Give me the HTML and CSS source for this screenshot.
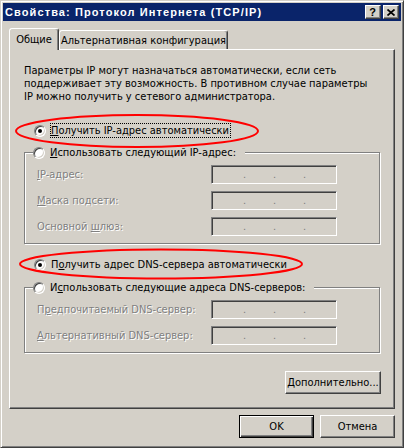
FILE: index.html
```html
<!DOCTYPE html>
<html lang="ru">
<head>
<meta charset="utf-8">
<title>Свойства: Протокол Интернета (TCP/IP)</title>
<link rel="stylesheet" href="styles.css">
</head>
<body>
<div class="window">
  <div class="titlebar">
    <span class="title">Свойства: Протокол Интернета (TCP/IP)</span>
    <div class="caption-btns">
      <span class="cbtn help">?</span>
      <span class="cbtn close"><svg width="8" height="7" viewBox="0 0 8 7"><path d="M0.5 0.5 L7.5 6.5 M7.5 0.5 L0.5 6.5" stroke="#000" stroke-width="1.7" fill="none"/></svg></span>
    </div>
  </div>
  <div class="tabs">
    <div class="tab active">Общие</div>
    <div class="tab">Альтернативная конфигурация</div>
  </div>
  <div class="panel">
    <p class="intro">Параметры IP могут назначаться автоматически, если сеть<br>поддерживает эту возможность. В противном случае параметры<br>IP можно получить у сетевого администратора.</p>

    <div class="radio-row">
      <span class="radio checked"></span>
      <span class="rlabel focus"><u>П</u>олучить IP-адрес автоматически</span>
    </div>

    <div class="group">
      <div class="group-head">
        <span class="radio"></span>
        <span class="rlabel"><u>И</u>спользовать следующий IP-адрес:</span>
      </div>
      <div class="field first">
        <span class="flabel"><u>I</u>P-адрес:</span>
        <span class="ipbox"><span class="seg s1"></span><span class="dot">.</span><span class="seg"></span><span class="dot">.</span><span class="seg"></span><span class="dot">.</span><span class="seg"></span></span>
      </div>
      <div class="field">
        <span class="flabel"><u>М</u>аска подсети:</span>
        <span class="ipbox"><span class="seg s1"></span><span class="dot">.</span><span class="seg"></span><span class="dot">.</span><span class="seg"></span><span class="dot">.</span><span class="seg"></span></span>
      </div>
      <div class="field">
        <span class="flabel">Основной <u>ш</u>люз:</span>
        <span class="ipbox"><span class="seg s1"></span><span class="dot">.</span><span class="seg"></span><span class="dot">.</span><span class="seg"></span><span class="dot">.</span><span class="seg"></span></span>
      </div>
    </div>

    <div class="radio-row second">
      <span class="radio checked"></span>
      <span class="rlabel nofocus">П<u>о</u>лучить адрес DNS-сервера автоматически</span>
    </div>

    <div class="group group-dns">
      <div class="group-head">
        <span class="radio"></span>
        <span class="rlabel">И<u>с</u>пользовать следующие адреса DNS-серверов:</span>
      </div>
      <div class="field first">
        <span class="flabel">П<u>р</u>едпочитаемый DNS-сервер:</span>
        <span class="ipbox"><span class="seg s1"></span><span class="dot">.</span><span class="seg"></span><span class="dot">.</span><span class="seg"></span><span class="dot">.</span><span class="seg"></span></span>
      </div>
      <div class="field">
        <span class="flabel"><u>А</u>льтернативный DNS-сервер:</span>
        <span class="ipbox"><span class="seg s1"></span><span class="dot">.</span><span class="seg"></span><span class="dot">.</span><span class="seg"></span><span class="dot">.</span><span class="seg"></span></span>
      </div>
    </div>

    <div class="adv-row">
      <button class="btn adv"><u>Д</u>ополнительно...</button>
    </div>

    <svg class="mark mark1" width="248" height="40" viewBox="0 0 248 40"><ellipse cx="123" cy="20" rx="121" ry="16" fill="none" stroke="#ff0000" stroke-width="2"/></svg>
    <svg class="mark mark2" width="290" height="36" viewBox="0 0 290 36"><ellipse cx="143" cy="17" rx="141" ry="14.5" fill="none" stroke="#ff0000" stroke-width="2"/></svg>
  </div>
  <div class="footer">
    <button class="btn default">OK</button>
    <button class="btn">Отмена</button>
  </div>
</div>
</body>
</html>
```
FILE: styles.css
```css
* { box-sizing: border-box; }
html, body { margin: 0; padding: 0; }
body {
  width: 404px;
  height: 448px;
  overflow: hidden;
  background: #d4d0c8;
  font-family: "DejaVu Sans", "Liberation Sans", sans-serif;
  font-stretch: condensed;
  font-size: 11px;
  line-height: 13px;
  color: #000;
}
.window {
  width: 404px;
  height: 448px;
  background: #d4d0c8;
  border: 1px solid;
  border-color: #d4d0c8 #404040 #404040 #d4d0c8;
  box-shadow: inset 1px 1px 0 #fff, inset -1px -1px 0 #808080;
  padding: 2px;
}
.titlebar {
  height: 18px;
  background: #0a246a;
  display: flex;
  align-items: center;
  padding-left: 2px;
}
.title {
  color: #fff;
  font-family: "Liberation Sans", sans-serif;
  font-stretch: normal;
  font-weight: bold;
  font-size: 11px;
  letter-spacing: 1.1px;
  flex: 1;
  white-space: nowrap;
}
.caption-btns { display: flex; gap: 2px; margin-right: 2px; }
.cbtn {
  width: 16px;
  height: 14px;
  background: #d4d0c8;
  border: 1px solid;
  border-color: #fff #404040 #404040 #fff;
  box-shadow: inset -1px -1px 0 #808080;
  display: flex;
  align-items: center;
  justify-content: center;
}
.help {
  font-family: "Liberation Sans", sans-serif;
  font-stretch: normal;
  font-weight: bold;
  font-size: 11px;
  line-height: 12px;
  padding-right: 1px;
}
.close svg { display: block; margin-right: 1px; }

.tabs {
  display: flex;
  align-items: flex-end;
  height: 21px;
  margin: 7px 0 0 6px;
}
.tab {
  height: 19px;
  background: #d4d0c8;
  border: 1px solid;
  border-bottom: none;
  border-color: #fff #404040 transparent #fff;
  border-radius: 3px 3px 0 0;
  box-shadow: inset -1px 0 0 #808080;
  padding-top: 3px;
  text-align: center;
  white-space: nowrap;
  width: 169px;
}
.tab.active {
  width: 50px;
  height: 22px;
  margin-bottom: -1px;
  padding-top: 4px;
  position: relative;
  z-index: 1;
}

.panel {
  height: 360px;
  margin: 0 6px;
  border: 1px solid;
  border-color: #fff #404040 #404040 #fff;
  box-shadow: inset -1px -1px 0 #808080;
  padding: 14px 0 0 14px;
  position: relative;
}
.intro { margin: 0; white-space: nowrap; }

.radio-row {
  display: flex;
  align-items: center;
  height: 15px;
  margin-top: 20px;
  padding-left: 10px;
}
.radio-row.second { margin-top: 13px; }
.radio {
  flex: none;
  width: 12px;
  height: 12px;
  border-radius: 50%;
  background: #fff;
  border: 1px solid;
  border-color: #808080 #fff #fff #808080;
  box-shadow: inset 1px 1px 0 #404040, inset -1px -1px 0 #d4d0c8;
  position: relative;
}
.radio.checked::after {
  content: "";
  position: absolute;
  left: 3px;
  top: 3px;
  width: 4px;
  height: 4px;
  border-radius: 50%;
  background: #000;
}
.rlabel { white-space: nowrap; margin-left: 4px; padding-left: 1px; }
.focus { border: 1px dotted #000; padding: 0 1px 0 0; margin-left: 4px; }
.nofocus { border: 1px solid transparent; padding: 0; }

.group {
  width: 356px;
  margin-top: 14px;
  border: 1px solid #808080;
  box-shadow: inset 1px 1px 0 #fff, 1px 1px 0 #fff;
  padding-bottom: 7px;
}
.group-dns { margin-top: 15px; }
.group-head {
  display: flex;
  align-items: center;
  width: fit-content;
  height: 13px;
  margin: -7px 0 0 8px;
  padding-right: 9px;
  background: #d4d0c8;
}
.group-head .rlabel { margin-left: 4px; }

.field {
  display: flex;
  align-items: center;
  height: 19px;
  margin-top: 7px;
  padding-left: 12px;
}
.field.first { margin-top: 6px; }
.flabel {
  width: 174px;
  color: #808080;
  text-shadow: 1px 1px 0 #fff;
  white-space: nowrap;
}
.ipbox {
  width: 126px;
  height: 19px;
  display: flex;
  align-items: flex-end;
  border: 1px solid;
  border-color: #808080 #fff #fff #808080;
  box-shadow: inset 1px 1px 0 #404040, inset -1px -1px 0 #d4d0c8;
  padding: 0 0 3px 1px;
  color: #808080;
  line-height: 11px;
}
.seg { width: 27px; }
.seg.s1 { width: 30px; }
.dot { width: 3px; font-family: "Liberation Sans", sans-serif; }

.adv-row {
  display: flex;
  justify-content: flex-end;
  width: 357px;
  margin-top: 18px;
}
.btn {
  font: inherit;
  font-stretch: inherit;
  width: 75px;
  height: 23px;
  padding: 0;
  background: #d4d0c8;
  color: #000;
  border: 1px solid;
  border-color: #fff #404040 #404040 #fff;
  box-shadow: inset -1px -1px 0 #808080;
  border-radius: 0;
}
.btn.adv { width: 96px; }
.btn.default {
  border: 1px solid #000;
  box-shadow: inset 1px 1px 0 #fff, inset -1px -1px 0 #404040, inset -2px -2px 0 #808080;
}
.footer {
  display: flex;
  justify-content: flex-end;
  gap: 6px;
  margin: 6px 6px 0 0;
}

.mark { position: absolute; overflow: visible; }
.mark1 { left: 4px; top: 61px; }
.mark2 { left: 8px; top: 197px; }
```
